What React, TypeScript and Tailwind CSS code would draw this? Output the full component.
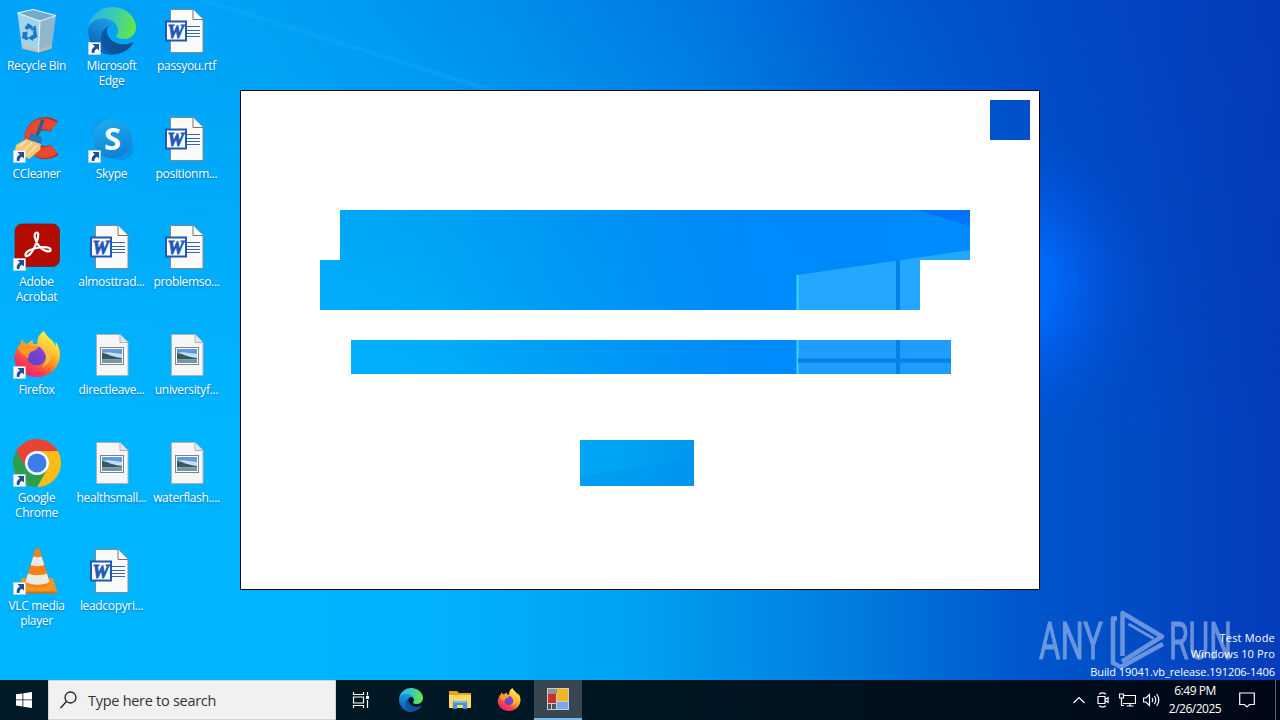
import type { ReactNode } from "react";

const EdgeArt = ({ id }: { id: string }) => (
  <g transform="scale(0.1875)">
    <defs>
      <linearGradient id={`${id}-a`} x1="63" y1="177" x2="241" y2="177" gradientUnits="userSpaceOnUse">
        <stop offset="0" stopColor="#0c59a4" />
        <stop offset="1" stopColor="#114a8b" />
      </linearGradient>
      <linearGradient id={`${id}-b`} x1="130" y1="80" x2="50" y2="230" gradientUnits="userSpaceOnUse">
        <stop offset="0" stopColor="#1b9de2" />
        <stop offset="0.5" stopColor="#1380d2" />
        <stop offset="1" stopColor="#0b5fb4" />
      </linearGradient>
      <linearGradient id={`${id}-c`} x1="20" y1="60" x2="250" y2="110" gradientUnits="userSpaceOnUse">
        <stop offset="0" stopColor="#2fb6e6" />
        <stop offset="0.45" stopColor="#3ac9b8" />
        <stop offset="1" stopColor="#66e745" />
      </linearGradient>
    </defs>
    <path fill={`url(#${id}-a)`} d="M235.68 188.04a94.1 94.1 0 0 1-10.54 4.71 101.88 101.88 0 0 1-35.9 6.46c-47.32 0-88.54-32.55-88.54-74.32a31.4 31.4 0 0 1 16.43-27.3c-42.8 1.8-53.8 46.4-53.8 72.53 0 73.88 68.1 81.37 82.76 81.37 7.9 0 19.84-2.3 27-4.56l1.31-.44a128.34 128.34 0 0 0 66.6-52.8 4 4 0 0 0-5.32-5.65z" />
    <path fill={`url(#${id}-b)`} d="M105.73 241.4a79.2 79.2 0 0 1-22.74-21.34 80.72 80.72 0 0 1 29.53-120c3.12-1.47 8.45-4.13 15.54-4a32.35 32.35 0 0 1 25.69 13 31.88 31.88 0 0 1 6.36 18.66c0-.21 24.46-79.6-80-79.6-43.9 0-80 41.66-80 78.21a130.15 130.15 0 0 0 12.11 56 128 128 0 0 0 156.38 67.11 75.55 75.55 0 0 1-62.78-8z" />
    <path fill={`url(#${id}-c)`} d="M152.33 148.86c-.81 1.05-3.3 2.5-3.3 5.66 0 2.61 1.7 5.12 4.72 7.23 14.38 10 41.49 8.68 41.56 8.68a59.56 59.56 0 0 0 30.27-8.35 61.38 61.38 0 0 0 30.43-52.88c.26-22.41-8-37.31-11.34-43.91C223.42 23.89 177.72 0 128 0A128 128 0 0 0 0 126.2c.48-36.54 36.8-66.05 80-66.05 3.5 0 23.46.34 42 10.07 16.34 8.58 24.9 18.94 30.85 29.21 6.18 10.67 7.28 24.15 7.28 29.52s-2.74 13.33-7.8 19.91z" />
  </g>
);

const FirefoxArt = ({ id }: { id: string }) => (
  <g>
    <defs>
      <linearGradient id={`${id}-a`} x1="40" y1="4" x2="14" y2="44" gradientUnits="userSpaceOnUse">
        <stop offset="0" stopColor="#fff44f" />
        <stop offset="0.3" stopColor="#ffc835" />
        <stop offset="0.55" stopColor="#ff8a26" />
        <stop offset="0.78" stopColor="#ff4048" />
        <stop offset="1" stopColor="#f0207e" />
      </linearGradient>
      <linearGradient id={`${id}-b`} x1="34" y1="14" x2="18" y2="32" gradientUnits="userSpaceOnUse">
        <stop offset="0" stopColor="#a03ae0" />
        <stop offset="1" stopColor="#5a46c8" />
      </linearGradient>
    </defs>
    <path fill={`url(#${id}-a)`} d="M9 8c-1 2-1 3-1 4L5 16c-2 4-3.500 7-3.500 11C2 38 12 46 24.500 46S47 36 47 23.500c0-5-2-10-4.500-13l.5 5C41 9 33 6 31 0c-6 4-7 9-6.500 13h-4.500l-.5-4c-2 1-4 2-5 4-3-1-5-2-5.500-5z" />
    <circle cx="23.500" cy="25" r="9.500" fill={`url(#${id}-b)`} />
    <path fill="#ff982a" d="M5 16c3-4 8-4 12-1 3 0 6-.5 8 1-1 3-5 4-7 5-2 1-3 3-2.500 6C11 25 7 21 5 16z" />
    <path fill="#ffc23a" d="M24.500 13c8-2 13 4 13 12 0 6-4 10-9 11 5-4 6-10 3-14-2-4-5-6-7-9z" opacity="0.9" />
  </g>
);

const Recycle = () => (
  <g>
    <path fill="#d8e4ea" opacity="0.75" d="M4.500 6 27 14l-1.500 31.500L9 41.500z" />
    <path fill="#9fb8c6" opacity="0.9" d="M27 14 43 8.500l-4.500 33-13 4z" />
    <path fill="#72aacb" d="M4.500 6 20 2.500l23 6L27 14z" />
    <path fill="#d9b6a4" opacity="0.7" d="m9 38 16.500 4.500L39 38l-.5 3.500-13 4L9 41.500z" />
    <path fill="none" stroke="#f2f9fc" strokeWidth="1" d="M4.500 6 20 2.500l23 6L27 14zM27 14l-1.500 31" />
    <path fill="none" stroke="#1778c8" strokeWidth="3.500" d="m13 22 2.500-3.500 3.500 2.500M21.500 24l1 5-3.500 2M15 32l-4-2 1-4.500" />
    <path fill="#1778c8" d="m17.500 23 6 1-1-6zM20 27.500v6.500l-5-3zM8.500 26l6-1.500-.5 5.500z" />
  </g>
);

const CCleaner = () => (
  <g>
    <path fill="none" stroke="#b92c1d" strokeWidth="13" d="M41.500 34.500A14.500 14.500 0 1 1 41 11.500" />
    <path fill="none" stroke="#e9472f" strokeWidth="10.500" d="M41 34A14.500 14.500 0 1 1 40.500 12" />
    <path fill="none" stroke="#24618f" strokeWidth="3.500" strokeLinecap="round" d="m29.500 6-6 16" />
    <path fill="#2879b3" d="m18 18 11 4-1 8-13-5z" />
    <path fill="#f4c779" d="m13 24 15 5-1 6-11 9-14-9 1-5z" />
    <path fill="none" stroke="#fbe5b1" strokeWidth="1.200" d="M14 26 5 32M19 28 9 37M24 30l-9 10" />
  </g>
);

const Acrobat = () => (
  <g>
    <rect x="2" y="1" width="44.500" height="42.500" rx="7" fill="#b30b00" stroke="#7c1a18" strokeWidth="0.800" />
    <path fill="none" stroke="#fff" strokeWidth="2.200" strokeLinejoin="round" d="M24 9.500c-4 0-2.500 8 2 13.500 4 5 10 6.500 11.500 4.500 1-3-5-4-11-3-8 1-14 4-14 7.500 0 2.500 4 1 7-4C24 21 27 9.500 24 9.500z" />
  </g>
);

const Chrome = () => (
  <g>
    <path fill="#ea4335" d="M24 12h20.780A24 24 0 0 0 3.220 12L13.600 30A12 12 0 0 1 24 12z" />
    <path fill="#fbbc15" d="M44.780 12H24a12 12 0 0 1 10.390 18L24 48A24 24 0 0 0 44.780 12z" />
    <path fill="#2f9e4c" d="M13.610 30 3.220 12A24 24 0 0 0 24 48l10.390-18a12 12 0 0 1-20.780 0z" />
    <circle cx="24" cy="24" r="12" fill="#fff" />
    <circle cx="24" cy="24" r="9.500" fill="#3b7ded" />
  </g>
);

const Skype = () => (
  <g>
    <defs>
      <linearGradient id="skype" x1="0" y1="0" x2="0.300" y2="1">
        <stop offset="0" stopColor="#1fb0ee" />
        <stop offset="1" stopColor="#0f82da" />
      </linearGradient>
    </defs>
    <circle cx="16" cy="15" r="12.500" fill="#0f9aea" opacity="0.7" />
    <circle cx="33" cy="33" r="12.500" fill="#0f8ae0" opacity="0.7" />
    <circle cx="24.500" cy="24" r="19.500" fill="url(#skype)" />
    <text x="24.500" y="35" textAnchor="middle" fill="#fff" fontSize="31" fontWeight="700" fontFamily="Open Sans, sans-serif">S</text>
  </g>
);

const Vlc = () => (
  <g>
    <path fill="#f7941d" d="M9 31h31l4 13v2H5l1-4z" />
    <path fill="#d96f0a" d="M5 44.500h39v2H5z" />
    <path fill="#f58212" d="M24.300 1.300c1.500 0 2.200.7 2.500 2L37 36c-2 6-23 6-25 0L22 3.300c.3-1.300 1-2 2.300-2z" />
    <path fill="#eceae7" d="M20.300 9.500c2.500 1 6 1 8.400 0l2.600 8.500c-4 1.500-10 1.500-13.600 0zM15 26.500c5 2 14 2 19 0l2.500 8.500c-5 3.500-19 3.500-24 0z" />
  </g>
);

const WordDoc = () => (
  <g transform="translate(-0.500 0)">
    <path fill="#fafafa" stroke="#7e8b93" strokeWidth="1" d="M8 2.500h22.500l10 10v33H8z" />
    <path fill="#fff" stroke="#6e7478" strokeWidth="1" d="M30.500 2.500v10h10" />
    <path stroke="#3467b5" strokeWidth="1.200" d="M24 19.500h13.500M24 23.500h13.500M24 26.500h13.500M24 29.500h13.500" />
    <rect x="3.500" y="14.500" width="20" height="19" fill="#fff" stroke="#2058b5" strokeWidth="2" />
    <text x="13.200" y="30.500" textAnchor="middle" fill="#2058b5" stroke="#2058b5" strokeWidth="0.900" fontSize="18.500" fontWeight="700" fontStyle="italic" fontFamily="Liberation Serif, serif">W</text>
  </g>
);

const ImageDoc = () => (
  <g>
    <path fill="#f6f6f6" stroke="#a9b4ba" strokeWidth="1" d="M8.500 3.500H32l8 8v33H8.500z" />
    <path fill="#e2e6e8" stroke="#a9b4ba" strokeWidth="1" d="M32 3.500v8h8" />
    <rect x="12.500" y="16.500" width="23" height="17" fill="#fff" stroke="#7b848b" />
    <path fill="#5f9ade" d="M14 18h20v8H14z" />
    <path fill="#c3dff2" d="M14 22c6-2 12 0 20 1v4H14z" />
    <path fill="#38595b" d="M14 22c5 0 9 4 20 5v1.500H14z" />
    <path fill="#6f97a8" d="M14 28.500h20v3.500H14z" />
  </g>
);

const ShortcutArrow = () => (
  <g>
    <rect x="0.500" y="35.500" width="12" height="12" fill="#fff" stroke="#c9d6de" strokeWidth="0.500" />
    <path fill="#1e4f9a" d="M4.500 37h6.500v6.500L9 41.700c-2 1-2.700 2.300-2.500 4.300H4c-1-3 .3-5.300 2.800-6.600z" />
  </g>
);

type Shortcut = { label: string; art: ReactNode; link?: boolean };

const columns: Shortcut[][] = [
  [
    { label: "Recycle Bin", art: <Recycle /> },
    { label: "CCleaner", art: <CCleaner />, link: true },
    { label: "Adobe Acrobat", art: <Acrobat />, link: true },
    { label: "Firefox", art: <FirefoxArt id="fx" />, link: true },
    { label: "Google Chrome", art: <Chrome />, link: true },
    { label: "VLC media player", art: <Vlc />, link: true },
  ],
  [
    { label: "Microsoft Edge", art: <EdgeArt id="edge" />, link: true },
    { label: "Skype", art: <Skype />, link: true },
    { label: "almosttrad...", art: <WordDoc /> },
    { label: "directleave...", art: <ImageDoc /> },
    { label: "healthsmall...", art: <ImageDoc /> },
    { label: "leadcopyri...", art: <WordDoc /> },
  ],
  [
    { label: "passyou.rtf", art: <WordDoc /> },
    { label: "positionm...", art: <WordDoc /> },
    { label: "problemso...", art: <WordDoc /> },
    { label: "universityf...", art: <ImageDoc /> },
    { label: "waterflash....", art: <ImageDoc /> },
  ],
];

const DesktopIcon = ({ item }: { item: Shortcut }) => (
  <div className="flex h-[108px] w-[75px] flex-col items-center pt-[7px]">
    <svg width="48" height="48" viewBox="0 0 48 48" className="shrink-0 overflow-visible">
      {item.art}
      {item.link && <ShortcutArrow />}
    </svg>
    <div className="mt-[3px] w-[70px] text-center text-[12px] leading-[15px] tracking-[-0.33px] text-white [text-shadow:0_1px_2px_rgba(0,50,110,0.5)]">
      {item.label}
    </div>
  </div>
);

const Wallpaper = () => (
  <svg className="absolute inset-0" width="1280" height="720" viewBox="0 0 1280 720">
    <defs>
      <linearGradient id="sky" x1="0" x2="1" y1="0" y2="0">
        <stop offset="0" stopColor="#00a4fb" />
        <stop offset="0.200" stopColor="#00a2f6" />
        <stop offset="0.400" stopColor="#008eec" />
        <stop offset="0.550" stopColor="#0078e2" />
        <stop offset="0.680" stopColor="#005cd0" />
        <stop offset="0.830" stopColor="#0349c6" />
        <stop offset="1" stopColor="#043bb9" />
      </linearGradient>
      <linearGradient id="ground" x1="0" x2="1" y1="0" y2="0">
        <stop offset="0" stopColor="#00b5ff" />
        <stop offset="0.320" stopColor="#00b3fe" />
        <stop offset="0.480" stopColor="#00a4f5" />
        <stop offset="0.650" stopColor="#0080e2" />
        <stop offset="0.800" stopColor="#0057cd" />
        <stop offset="1" stopColor="#043cba" />
      </linearGradient>
      <linearGradient id="fade" x1="0" x2="0" y1="0" y2="1">
        <stop offset="0" stopColor="#000" />
        <stop offset="0.600" stopColor="#fff" />
      </linearGradient>
      <mask id="lower">
        <rect width="1280" height="720" fill="url(#fade)" />
      </mask>
      <radialGradient id="glow" cx="1000" cy="285" r="165" gradientUnits="userSpaceOnUse">
        <stop offset="0" stopColor="#0074ff" />
        <stop offset="0.300" stopColor="#006cff" stopOpacity="0.900" />
        <stop offset="0.650" stopColor="#005ff0" stopOpacity="0.350" />
        <stop offset="1" stopColor="#0050d8" stopOpacity="0" />
      </radialGradient>
      <linearGradient id="beam" x1="450" x2="970" y1="0" y2="0" gradientUnits="userSpaceOnUse">
        <stop offset="0" stopColor="#0098fb" stopOpacity="0" />
        <stop offset="0.600" stopColor="#008cff" stopOpacity="0.850" />
        <stop offset="1" stopColor="#008cff" />
      </linearGradient>
    </defs>
    <rect width="1280" height="720" fill="url(#sky)" />
    <rect width="1280" height="720" fill="url(#ground)" mask="url(#lower)" />
    <rect width="1280" height="720" fill="url(#glow)" />
    <path fill="#20b4ff" opacity="0.220" d="M195 0h14l290 90h-16z" />
    <path fill="#0074ff" d="M860 200h110v40z" />
    <path fill="url(#beam)" d="M340 200h543l87 26v60l-180 90H340z" />
    <path fill="#23a7ff" d="M797 275 970 250v124H797z" />
    <path fill="#1f9dff" d="M797 340h173v34H797z" />
    <path stroke="#3cd4ff" strokeWidth="2" d="M797.500 275v99" />
    <path stroke="#0480ea" strokeWidth="4" d="M898 260v114M798 360.500h172" />
    <path fill="#0090ee" opacity="0.300" d="m580 476 114-17v27H580z" />
  </svg>
);

const AppWindow = () => (
  <div className="absolute left-[240px] top-[90px] flex h-[500px] w-[800px] flex-col border border-black">
    <div className="h-[9px] bg-white" />
    <div className="flex h-[40px]">
      <div className="w-[749px] bg-white" />
      <div className="w-[40px]" />
      <div className="flex-1 bg-white" />
    </div>
    <div className="h-[70px] bg-white" />
    <div className="flex h-[50px]">
      <div className="w-[99px] bg-white" />
      <div className="w-[630px]" />
      <div className="flex-1 bg-white" />
    </div>
    <div className="flex h-[50px]">
      <div className="w-[79px] bg-white" />
      <div className="w-[600px]" />
      <div className="flex-1 bg-white" />
    </div>
    <div className="h-[30px] bg-white" />
    <div className="flex h-[34px]">
      <div className="w-[110px] bg-white" />
      <div className="w-[600px]" />
      <div className="flex-1 bg-white" />
    </div>
    <div className="h-[66px] bg-white" />
    <div className="flex h-[46px]">
      <div className="w-[339px] bg-white" />
      <div className="w-[114px]" />
      <div className="flex-1 bg-white" />
    </div>
    <div className="flex-1 bg-white" />
  </div>
);

const Watermark = () => (
  <div className="absolute bottom-0 right-0 h-[80px] w-[250px]">
    <svg className="absolute left-0 top-0 opacity-50" width="250" height="80" viewBox="0 0 250 80">
      <g fill="#cfdcf5" stroke="#cfdcf5" strokeWidth="0.900" fontFamily="Roboto, sans-serif" fontSize="51">
        <text x="9" y="59" textLength="64" lengthAdjust="spacingAndGlyphs">ANY</text>
        <text x="139" y="59" textLength="63" lengthAdjust="spacingAndGlyphs">RUN</text>
      </g>
      <g fill="none" stroke="#cfdcf5" strokeWidth="4.500" strokeLinejoin="round">
        <path d="M87 18.500h-4V63l8 4 42-23" />
        <path d="M92.500 56V13l39.500 23.500-40 25" />
        <path d="M98.500 24l25 14.500" strokeWidth="3" />
      </g>
    </svg>
    <div className="relative flex flex-col items-end pr-[5px] pt-[29px] text-[11px] leading-[17px] text-white">
      <span className="-mb-px tracking-[0.2px]">Test Mode</span>
      <span className="mb-px tracking-[0.1px]">Windows 10 Pro</span>
      <span className="tracking-[-0.06px]">Build 19041.vb_release.191206-1406</span>
    </div>
  </div>
);

const Taskbar = () => (
  <div className="relative flex h-[40px] bg-gradient-to-r from-[#001a26] via-[#001722] to-[#000817] text-white">
    <div className="flex w-[48px] items-center justify-center">
      <svg width="16" height="16" viewBox="0 0 16 16" fill="#fff">
        <path d="M0 2.300 6.500 1.400v6.100H0zM7.300 1.300 16 0v7.500H7.300zM0 8.300h6.500v6.200L0 13.600zM7.300 8.300H16V16l-8.700-1.300z" />
      </svg>
    </div>
    <div className="flex w-[288px] items-center border border-[#d4d4d4] bg-[#f1f1f1] pl-[11px] text-[#333]">
      <svg width="17" height="18" viewBox="0 0 17 18" fill="none" stroke="#222" strokeWidth="1.300">
        <circle cx="10.500" cy="6.500" r="5.500" />
        <path d="m6.500 10.500-6 6.500" />
      </svg>
      <span className="ml-[11px] pt-[2px] text-[14.500px] tracking-[-0.28px]">Type here to search</span>
    </div>
    <div className="flex w-[49px] items-center justify-center">
      <svg width="18" height="18" viewBox="0 0 18 18" fill="none" stroke="#fff" strokeWidth="1.200">
        <path d="M1.500 1v2.500h10V1M1.500 17v-2.500h10V17M1.500 6h10v6h-10zM15.500 1v3.500M15.500 9v8" />
        <path d="M14 5h3v3h-3z" fill="#fff" stroke="none" />
      </svg>
    </div>
    <div className="ml-px flex w-[49px] items-center justify-center">
      <svg width="24" height="24" viewBox="0 0 48 48"><EdgeArt id="task-edge" /></svg>
    </div>
    <div className="flex w-[49px] items-center justify-center">
      <svg width="22" height="20" viewBox="0 0 22 20">
        <path fill="#e8a020" d="M0 1h8l2 2h12v5H0z" />
        <path fill="#ffd766" d="M0 5h22v13H0z" />
        <path fill="#3a94d8" d="M4 11h14v8h-4v-4H8v4H4z" />
        <path fill="#70bfef" d="M5 11h12v2H5z" />
      </svg>
    </div>
    <div className="flex w-[49px] items-center justify-center">
      <svg width="24" height="24" viewBox="0 0 48 48"><FirefoxArt id="task-fx" /></svg>
    </div>
    <div className="ml-px flex w-[48px] items-center justify-center border-b-2 border-[#76b9ed] bg-[#37464f]">
      <svg width="22" height="22" viewBox="0 0 22 22">
        <path fill="#c9cdd0" d="M0 0h22v22H0z" />
        <path fill="#8d9397" d="M1 1h9v5H1z" />
        <path fill="#c8302f" d="M1 6h8v9H1z" />
        <path fill="#f3b61d" d="M10 1h11v12H10z" />
        <path fill="#7aa7f0" d="M10 14h11v7H10z" />
        <path fill="#4c5257" d="M1 16h3v5H1zM5 16h4v5H5z" />
      </svg>
    </div>
    <div className="flex-1" />
    <div className="flex items-center">
      <div className="flex w-[24px] justify-center">
        <svg width="12" height="8" viewBox="0 0 12 8" fill="none" stroke="#fff" strokeWidth="1.200"><path d="m.5 7 5.500-5.500L11.500 7" /></svg>
      </div>
      <div className="flex w-[24px] justify-center">
        <svg width="12" height="16" viewBox="0 0 12 16" fill="none" stroke="#fff" strokeWidth="1.200">
          <path d="M1 4.500h7v7H1zM8 7.500l3-2v5l-3-2M2 2.200Q5.500-.3 9 2.200M2 13.800q3.500 2.500 7 0" />
        </svg>
      </div>
      <div className="flex w-[24px] justify-center">
        <svg width="17" height="14" viewBox="0 0 17 14" fill="none" stroke="#fff" strokeWidth="1.200">
          <path d="M5 2.500h11.500v8H4M7.500 13h7M11 10.500V13M.5 1h4v4h-4zM2.500 5v7.500H5" />
        </svg>
      </div>
      <div className="flex w-[24px] justify-center">
        <svg width="17" height="14" viewBox="0 0 17 14" fill="none" stroke="#fff" strokeWidth="1.200">
          <path d="M.5 5h2.500l3.500-3.500v11L3 9H.5zM9 5q1.500 2 0 4M11.300 3q3 4 0 8M13.600 1q4.500 6 0 12" />
        </svg>
      </div>
    </div>
    <div className="ml-[4px] flex w-[56px] flex-col items-center pt-[2px] text-[12px] leading-[18px]">
      <span className="whitespace-nowrap tracking-[-0.45px]">6:49 PM</span>
      <span className="whitespace-nowrap tracking-[-0.5px]">2/26/2025</span>
    </div>
    <div className="flex w-[48px] items-center justify-center">
      <svg width="16" height="16" viewBox="0 0 16 16" fill="none" stroke="#fff" strokeWidth="1.200">
        <path d="M.7 1h14.600v11.500h-4.800L8 15l-2.500-2.500H.7z" />
      </svg>
    </div>
    <div className="ml-[4px] w-[5px] border-l border-[#59616b]" />
  </div>
);

export default function App() {
  return (
    <div className="relative flex h-[720px] w-[1280px] flex-col overflow-hidden font-['Open_Sans','Noto_Sans',sans-serif]">
      <Wallpaper />
      <div className="relative flex h-[680px]">
        <div className="-ml-px flex">
          {columns.map((items, i) => (
            <div key={i} className="flex flex-col">
              {items.map((item) => (
                <DesktopIcon key={item.label} item={item} />
              ))}
            </div>
          ))}
        </div>
        <AppWindow />
        <Watermark />
      </div>
      <Taskbar />
    </div>
  );
}
